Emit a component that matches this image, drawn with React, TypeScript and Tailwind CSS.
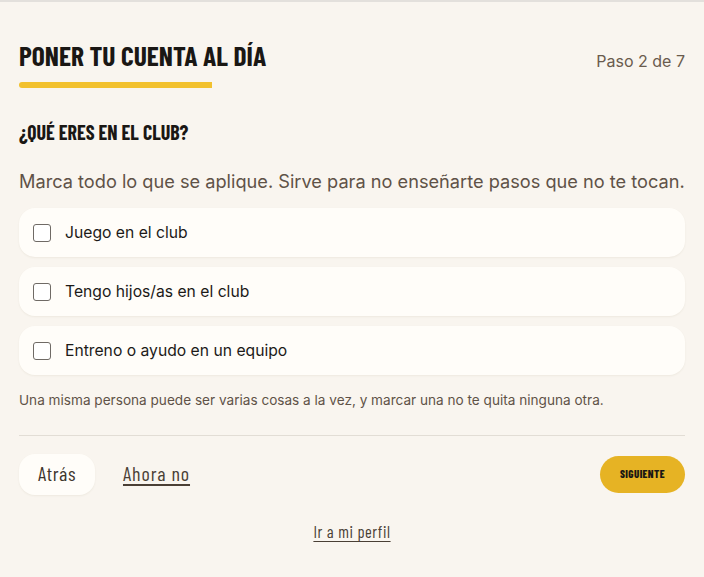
import { useState } from "react";

const options = [
    "Juego en el club",
    "Tengo hijos/as en el club",
    "Entreno o ayudo en un equipo",
];

const condensed = { fontFamily: '"Barlow Condensed", "Roboto Condensed", sans-serif' };

export default function App() {
    const [checked, setChecked] = useState<boolean[]>([false, false, false]);

    return (
        <div className="min-h-[577px] bg-[#f9f5ef] border-t-2 border-[#e3e0dc] px-[19px] pt-[37px] font-['Inter',sans-serif]">
            {/* Header */}
            <div className="flex items-start justify-between">
                <div>
                    <h1 className="text-[27.5px] leading-[32px] font-bold text-[#1a1714]" style={condensed}>
                        PONER TU CUENTA AL DÍA
                    </h1>
                    <div className="mt-[11px] h-[6px] w-[193px] bg-[#f2c12e] rounded-l-full" />
                </div>
                <span className="mt-[10px] text-[16px] text-[#6a5b4d]">Paso 2 de 7</span>
            </div>

            <h2 className="mt-[32px] text-[20px] leading-[24px] font-bold text-[#1a1714]" style={condensed}>
                ¿QUÉ ERES EN EL CLUB?
            </h2>

            <p className="mt-[24px] text-[18.2px] leading-[26px] text-[#5f5247]">
                Marca todo lo que se aplique. Sirve para no enseñarte pasos que no te tocan.
            </p>

            {/* Options */}
            <div className="mt-[14px] flex flex-col gap-[10px]">
                {options.map((label, i) => (
                    <label
                        key={label}
                        className="flex items-center gap-[14px] h-[49px] px-[14px] bg-[#fffdf9] rounded-[16px] shadow-[0_1px_2px_rgba(120,100,70,0.08)] cursor-pointer"
                    >
                        <input
                            type="checkbox"
                            checked={checked[i]}
                            onChange={() => setChecked(checked.map((c, j) => (j === i ? !c : c)))}
                            className="appearance-none w-[18px] h-[18px] border border-[#6f6a65] rounded-[3px] bg-white checked:bg-[#e6b324]"
                        />
                        <span className="text-[15.7px] text-[#1c1a18]">{label}</span>
                    </label>
                ))}
            </div>

            <p className="mt-[15px] text-[13.6px] leading-[20px] text-[#5f5247]">
                Una misma persona puede ser varias cosas a la vez, y marcar una no te quita ninguna otra.
            </p>

            <div className="mt-[25px] border-t border-[#e2ddd5]" />

            {/* Actions */}
            <div className="mt-[18px] flex items-center justify-between">
                <div className="flex items-center gap-[28px]">
                    <button
                        className="h-[41px] px-[19px] pb-[3px] bg-[#fffdf9] rounded-[16px] text-[20px] tracking-[0.6px] text-[#3d342c] shadow-[0_1px_2px_rgba(120,100,70,0.08)]"
                        style={condensed}
                    >
                        Atrás
                    </button>
                    <a href="#" className="pb-[3px] text-[20px] tracking-[0.9px] text-[#4a3f35] underline underline-offset-[3px]" style={condensed}>
                        Ahora no
                    </a>
                </div>
                <button
                    className="h-[37px] px-[20px] bg-[#e6b324] rounded-full text-[11px] font-extrabold tracking-[0.4px] text-[#1a1714]"
                    style={condensed}
                >
                    SIGUIENTE
                </button>
            </div>

            <div className="mt-[25px] flex justify-center">
                <a href="#" className="text-[16.5px] leading-[22px] tracking-[0.6px] text-[#4a3f35] underline underline-offset-[3px]" style={condensed}>
                    Ir a mi perfil
                </a>
            </div>
        </div>
    );
}
